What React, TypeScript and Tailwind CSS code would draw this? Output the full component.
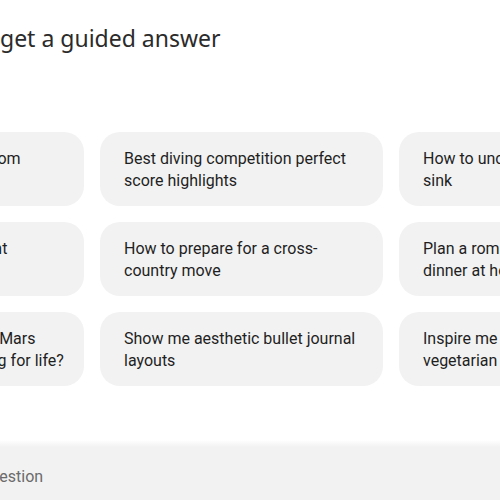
import React from "react";

const rows: string[][][] = [
  [
    ["Smart ideas for a bathroom"],
    ["Best diving competition perfect", "score highlights"],
    ["How to unclog a bathroom", "sink"],
  ],
  [
    ["Help me plan a nice event"],
    ["How to prepare for a cross-", "country move"],
    ["Plan a romantic candlelit", "dinner at home"],
  ],
  [
    ["What is NASA's rover on Mars", "now constantly searching for life?"],
    ["Show me aesthetic bullet journal", "layouts"],
    ["Inspire me with easy weeknight", "vegetarian recipes"],
  ],
];

function Card({ lines }: { lines: string[] }) {
  return (
    <div className="h-[74px] w-[283px] shrink-0 rounded-[20px] bg-[#f2f2f2] px-6 pt-[16px]">
      <p className="text-[16px] leading-[22px] text-[#1f1f1f] whitespace-nowrap">
        {lines.map((l, i) => (
          <span key={i} className="block">
            {l}
          </span>
        ))}
      </p>
    </div>
  );
}

export default function App() {
  return (
    <div
      className="relative h-[500px] w-[500px] overflow-hidden bg-white"
      style={{ fontFamily: "Roboto, 'Liberation Sans', sans-serif" }}
    >
      {/* heading */}
      <div className="pt-[22px]">
        <h1
          className="text-[23px] leading-[32px] text-[#2b2b2b] whitespace-nowrap"
          style={{ fontFamily: "'Noto Sans', 'Open Sans', sans-serif" }}
        >
          get a guided answer
        </h1>
      </div>

      {/* suggestion grid */}
      <div className="ml-[-199px] mt-[78px] flex flex-col gap-4">
        {rows.map((row, r) => (
          <div key={r} className="flex gap-4">
            {row.map((lines, c) => (
              <Card key={c} lines={lines} />
            ))}
          </div>
        ))}
      </div>

      {/* input bar */}
      <div className="absolute bottom-0 left-0 right-0">
        <div className="h-[7px] bg-gradient-to-b from-white to-[#f2f2f2]" />
        <div className="flex h-[53px] items-center bg-[#f2f2f2] pt-[6px]">
          <span className="ml-[-62px] text-[16px] text-[#6b6b6b] whitespace-nowrap">
            Ask a question
          </span>
        </div>
      </div>
    </div>
  );
}
